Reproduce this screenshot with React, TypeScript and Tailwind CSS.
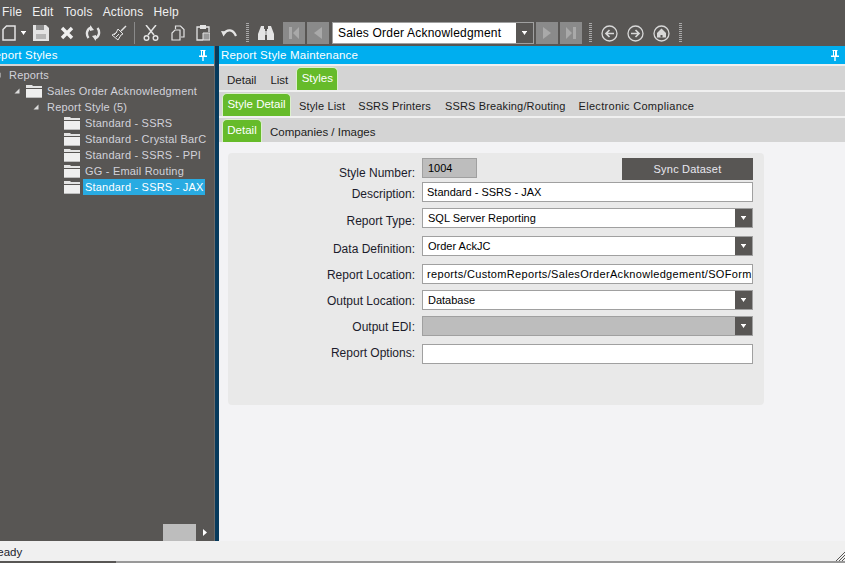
const font = { fontFamily: '"Liberation Sans", Arial, sans-serif' };

const Caret = () => (
  <svg width="5" height="4" viewBox="0 0 5 4"><path d="M0 0h5v1H4.500L2.500 4 .5 1H0z" fill="#fff" /></svg>
);

const Folder = () => (
  <svg width="16" height="13" viewBox="0 0 16 13" className="shrink-0">
    <path d="M0 0h6l1 1h9v2H0z" fill="#e4e4e4" />
    <path d="M0 4h16v8H0z" fill="#efefef" />
    <path d="M0 12h16v1H0z" fill="#bdbdbd" />
  </svg>
);

const Expander = () => (
  <svg width="6" height="6" viewBox="0 0 6 6" className="shrink-0"><path d="M5.500 0.500V5.500H0.500z" fill="#dcdcdc" /></svg>
);

const Dotted = ({ className = "" }: { className?: string }) => (
  <div className={"w-[3px] h-[20px] shrink-0 bg-[repeating-linear-gradient(to_bottom,#a8a8a8_0,#a8a8a8_1px,transparent_1px,transparent_2px)] " + className} />
);

const Pin = () => (
  <svg width="8" height="11" viewBox="0 0 8 11"><path d="M1.500 0h5v1h-.5v4.500h2v1.500H4.700v4h-1.400V7H0V5.500h2V1h-.5z" fill="#fff" /><path d="M3 1h1v4.500H3z" fill="#00aeef" /></svg>
);

const NavBtn = ({ d, className = "" }: { d: string; className?: string }) => (
  <div className={"w-[22px] h-[22px] bg-[#8a8a8a] flex items-center justify-center shrink-0 " + className}>
    <svg width="14" height="14" viewBox="0 0 14 14"><path d={d} fill="#a9a9a9" /></svg>
  </div>
);

const CircleIcon = ({ children, className = "" }: { children: React.ReactNode; className?: string }) => (
  <svg width="17" height="17" viewBox="0 0 17 17" className={"shrink-0 " + className} fill="none">
    <circle cx="8.500" cy="8.500" r="7.500" stroke="#d8d8d8" strokeWidth="1.300" />
    {children}
  </svg>
);

const Toolbar = () => (
  <div className="h-[22px] mt-[1px] mb-[2px] flex items-center pl-[2px] text-[#e4e4e4] shrink-0">
    <svg width="14" height="16" viewBox="0 0 14 16" fill="none" className="shrink-0"><path d="M4.500 1H13v14H1V4.500z" stroke="#e4e4e4" strokeWidth="1.500" /></svg>
    <div className="ml-[5px] flex"><Caret /></div>
    <svg width="16" height="16" viewBox="0 0 16 16" className="ml-[7px] shrink-0"><path d="M0 0h13l3 3v13H0z" fill="#e4e4e4" /><path d="M3 0h8v5H3z" fill="#8e8e8e" /><path d="M3 9h10v5H3z" fill="#b5b5b5" /></svg>
    <svg width="14" height="14" viewBox="0 0 14 14" className="ml-[11px] shrink-0"><path d="M2 2l10 10M12 2L2 12" stroke="#efefef" strokeWidth="3.400" /></svg>
    <svg width="16" height="16" viewBox="0 0 16 16" fill="none" className="ml-[11px] shrink-0"><path d="M6.500 2.500C2 3.500.5 9 3.500 13M9.500 13.500C14 12.500 15.500 7 12.500 3" stroke="#e4e4e4" strokeWidth="2.400" /><path d="M5 0v6l4-1zM11 16v-6l-4 1z" fill="#e4e4e4" /></svg>
    <svg width="16" height="16" viewBox="0 0 16 16" fill="none" className="ml-[10px] shrink-0"><path d="M10 6L15 1" stroke="#e4e4e4" strokeWidth="1.500" /><path d="M7 4l5 5-2 1-3 5-6-5 4-2z" stroke="#e4e4e4" /><path d="M3 10l3-3M5 12l3-3" stroke="#e4e4e4" /></svg>
    <div className="w-px h-[22px] bg-[#8a8a8a] ml-[7px] shrink-0" />
    <svg width="16" height="16" viewBox="0 0 16 16" fill="none" className="ml-[8px] shrink-0"><path d="M3 0l8 10M13 0L5 10" stroke="#e4e4e4" strokeWidth="1.500" /><circle cx="3.500" cy="13" r="2.300" stroke="#e4e4e4" strokeWidth="1.400" /><circle cx="12.500" cy="13" r="2.300" stroke="#e4e4e4" strokeWidth="1.400" /></svg>
    <svg width="14" height="16" viewBox="0 0 14 16" fill="none" className="ml-[12px] shrink-0"><path d="M4.500 4V1h5l3.500 3.500V12h-3" stroke="#e4e4e4" strokeWidth="1.200" /><path d="M4 5h5v10H1V8z" stroke="#e4e4e4" strokeWidth="1.200" /></svg>
    <svg width="14" height="16" viewBox="0 0 14 16" fill="none" className="ml-[11px] shrink-0"><path d="M4 2H1v13h6M10 2h3v5" stroke="#e4e4e4" strokeWidth="1.300" /><path d="M4 0h6v4H4z" fill="#e4e4e4" /><path d="M7 8h7v7H7z" fill="#9a9a9a" stroke="#e4e4e4" /></svg>
    <svg width="16" height="11" viewBox="0 0 16 11" fill="none" className="ml-[11px] shrink-0"><path d="M3 5.500C6 1 12 1 15 8" stroke="#e4e4e4" strokeWidth="2.200" /><path d="M0 3l6 .5-3.500 5z" fill="#e4e4e4" /></svg>
    <Dotted className="ml-[9px]" />
    <svg width="16" height="15" viewBox="0 0 16 15" className="ml-[9px] shrink-0"><path d="M3 0h3v3h1v11H0V8zM10 0h3l3 8v6H9V3h1z" fill="#e4e4e4" /><path d="M7 5h2v4H7z" fill="#bbb" /></svg>
    <NavBtn className="ml-[9px]" d="M2 1h3v12H2zM12 1v12L6 7z" />
    <NavBtn className="ml-[2px]" d="M11 1v12L3 7z" />
    <div className="ml-[3px] w-[202px] h-[22px] border border-[#a0a0a0] bg-white flex items-center shrink-0">
      <span className="flex-1 text-black text-[12px] pl-[5px] tracking-[0.2px] whitespace-nowrap">Sales Order Acknowledgment</span>
      <div className="w-[17px] h-full bg-[#585654] flex items-center justify-center"><Caret /></div>
    </div>
    <NavBtn className="ml-[2px]" d="M3 1v12l8-6z" />
    <NavBtn className="ml-[2px]" d="M2 1v12l6-6zM9 1h3v12H9z" />
    <Dotted className="ml-[7px]" />
    <CircleIcon className="ml-[9px]"><path d="M13 8.500H6M8.500 5l-3.500 3.500 3.500 3.500" stroke="#d8d8d8" strokeWidth="1.700" /></CircleIcon>
    <CircleIcon className="ml-[9px]"><path d="M4 8.500h7M8.500 5l3.500 3.500-3.500 3.500" stroke="#d8d8d8" strokeWidth="1.700" /></CircleIcon>
    <CircleIcon className="ml-[9px]"><path d="M8.500 3.500L13 8v4.500H4V8z" fill="#d8d8d8" /><path d="M7.500 10h2v2.500h-2z" fill="#585654" /></CircleIcon>
    <Dotted className="ml-[9px]" />
  </div>
);

const TreeRow = ({ indent, label, folder, expander, selected }: { indent: string; label: string; folder?: boolean; expander?: boolean; selected?: boolean }) => (
  <div className={"h-[16px] flex items-center whitespace-nowrap " + indent}>
    {expander && <div className="w-[12px] shrink-0 flex"><Expander /></div>}
    {folder && <div className="mr-[3px] flex"><Folder /></div>}
    <span className={"h-[16px] leading-[16px] px-[2px] " + (selected ? "bg-[#29abe2] text-white w-[122px]" : "")}>{label}</span>
  </div>
);

const TabRow = ({ className = "", children }: { className?: string; children: React.ReactNode }) => (
  <div className={"h-[24px] bg-[#d4d4d4] flex items-end shrink-0 text-[#1c1c1c] " + className}>{children}</div>
);

const ActiveTab = ({ label, className }: { label: string; className: string }) => (
  <div className={"h-[23px] bg-[#66bb2a] border border-b-0 border-[#dcf0cc] rounded-t-[5px] text-white text-[11.500px] tracking-normal flex items-center justify-center shrink-0 " + className}>{label}</div>
);

const Tab = ({ label, className }: { label: string; className: string }) => (
  <span className={"h-[23px] leading-[26px] whitespace-nowrap shrink-0 " + className}>{label}</span>
);

const inputBox = "h-[20px] border border-[#a0a0a0] flex items-center text-[11px] text-black whitespace-nowrap overflow-hidden";

// the labels sit a little under their fields, and not by the same amount on each row
const Row = ({ label, className, labelClass, children }: { label: string; className: string; labelClass: string; children: React.ReactNode }) => (
  <div className={"flex items-start " + className}>
    <label className={"w-[187px] h-[20px] text-right text-[12px] text-[#1c1c2c] shrink-0 mr-[7px] " + labelClass}>{label}</label>
    {children}
  </div>
);

const Select = ({ value, disabled }: { value?: string; disabled?: boolean }) => (
  <div className={inputBox + " w-[331px] " + (disabled ? "bg-[#bdbdbd]" : "bg-white")}>
    <span className="flex-1 pl-[5px]">{value}</span>
    <div className="w-[17px] h-full bg-[#585654] flex items-center justify-center"><Caret /></div>
  </div>
);

const Input = ({ value, className = "" }: { value?: string; className?: string }) => (
  <div className={inputBox + " w-[331px] bg-white pl-[4px] " + className}>{value}</div>
);

export default function App() {
  return (
    <div style={font} className="w-[845px] h-[563px] overflow-hidden bg-[#585654] flex flex-col">
      <div className="h-[21px] flex items-center pl-[2px] pt-[2px] gap-[10px] text-[12px] tracking-[0.2px] text-[#f0f0f0] shrink-0">
        <span>File</span>
        <span>Edit</span>
        <span>Tools</span>
        <span>Actions</span>
        <span>Help</span>
      </div>
      <Toolbar />
      <div className="flex-1 min-h-0 flex">
        <div className="w-[214px] flex flex-col shrink-0">
          <div className="h-[18px] bg-[#00aeef] text-white text-[11.500px] flex items-center justify-between pr-[7px] pt-[1px] shrink-0 overflow-hidden">
            <span className="-ml-[14px] tracking-[0.2px] whitespace-nowrap">Report Styles</span>
            <Pin />
          </div>
          <div className="h-[2px] bg-[#d4d4d4] shrink-0" />
          <div className="flex-1 min-h-0 flex flex-col pt-[1px] text-[11px] text-[#d2d2da] tracking-[0.2px]">
            <TreeRow indent="-ml-[5px]" label="Reports" expander />
            <TreeRow indent="pl-[14px]" label="Sales Order Acknowledgment" expander folder />
            <TreeRow indent="pl-[33px]" label="Report Style (5)" expander />
            <TreeRow indent="pl-[64px]" label="Standard - SSRS" folder />
            <TreeRow indent="pl-[64px]" label="Standard - Crystal BarC" folder />
            <TreeRow indent="pl-[64px]" label="Standard - SSRS - PPI" folder />
            <TreeRow indent="pl-[64px]" label="GG - Email Routing" folder />
            <TreeRow indent="pl-[64px]" label="Standard - SSRS - JAX" folder selected />
            <div className="mt-auto h-[17px] flex items-center justify-end pr-[7px]">
              <div className="w-[33px] h-[17px] bg-[#bdbdbd] mr-[7px]" />
              <svg width="4" height="7" viewBox="0 0 4 7"><path d="M0 0l4 3.500L0 7z" fill="#fff" /></svg>
            </div>
          </div>
        </div>
        <div className="w-[5px] bg-[#063a5c] border-l border-[#6a6a6a] shrink-0" />
        <div className="flex-1 min-w-0 flex flex-col bg-[#f3f3f5]">
          <div className="h-[18px] bg-[#00aeef] text-white text-[11.500px] flex items-center justify-between pl-[2px] pr-[6px] pt-[1px] shrink-0 tracking-[0.2px]">
            <span>Report Style Maintenance</span>
            <Pin />
          </div>
          <div className="h-[2px] bg-[#f0f0f0] shrink-0" />
          <TabRow className="text-[11.500px]">
            <Tab label="Detail" className="ml-[8px]" />
            <Tab label="List" className="ml-[14px]" />
            <ActiveTab label="Styles" className="ml-[8px] w-[42px]" />
          </TabRow>
          <div className="h-[2px] bg-[#f0f0f0] shrink-0" />
          <TabRow className="text-[11px] tracking-[0.15px]">
            <ActiveTab label="Style Detail" className="ml-[3px] w-[69px]" />
            <Tab label="Style List" className="ml-[8px]" />
            <Tab label="SSRS Printers" className="ml-[13px]" />
            <Tab label="SSRS Breaking/Routing" className="ml-[14px]" />
            <Tab label="Electronic Compliance" className="ml-[13px] tracking-[0.3px]" />
          </TabRow>
          <div className="h-[2px] bg-[#f0f0f0] shrink-0" />
          <TabRow className="text-[11.500px]">
            <ActiveTab label="Detail" className="ml-[3px] w-[40px]" />
            <Tab label="Companies / Images" className="ml-[8px]" />
          </TabRow>
          <div className="flex-1 min-h-0 pt-[11px] pl-[9px]">
            <div className="w-[536px] h-[252px] bg-[#e9e9e9] rounded-[4px] pt-[5px]">
              <Row label="Style Number:" className="" labelClass="leading-[30px]">
                <div className={inputBox + " w-[55px] bg-[#bdbdbd] pl-[5px]"}>1004</div>
                <div className="ml-[145px] w-[131px] h-[22px] bg-[#585654] text-[#e8e8f0] text-[11px] flex items-center justify-center tracking-[0.2px]">Sync Dataset</div>
              </Row>
              <Row label="Description:" className="mt-[2px]" labelClass="leading-[24px]"><Input value="Standard - SSRS - JAX" /></Row>
              <Row label="Report Type:" className="mt-[6px]" labelClass="leading-[26px]"><Select value="SQL Server Reporting" /></Row>
              <Row label="Data Definition:" className="mt-[8px]" labelClass="leading-[26px]"><Select value="Order AckJC" /></Row>
              <Row label="Report Location:" className="mt-[8px]" labelClass="leading-[22px]"><Input value="reports/CustomReports/SalesOrderAcknowledgement/SOForm" className="tracking-[0.33px]" /></Row>
              <Row label="Output Location:" className="mt-[6px]" labelClass="leading-[22px]"><Select value="Database" /></Row>
              <Row label="Output EDI:" className="mt-[6px]" labelClass="leading-[23px]"><Select disabled /></Row>
              <Row label="Report Options:" className="mt-[8px]" labelClass="leading-[18px]"><Input /></Row>
            </div>
          </div>
        </div>
      </div>
      <div className="h-[20px] bg-[#f0f0f0] shrink-0 flex items-center justify-between pt-[4px] text-[11.500px] text-[#1c1c2c]">
        <span className="-ml-[11px]">Ready</span>
        <svg width="9" height="9" viewBox="0 0 9 9" className="self-end"><path d="M0 9l9-9M3 9l6-6M6 9l3-3" stroke="#585654" /></svg>
      </div>
      <div className="h-[2px] shrink-0 flex">
        <div className="w-[116px] bg-[#585654]" />
        <div className="flex-1 bg-[#999999]" />
      </div>
    </div>
  );
}
